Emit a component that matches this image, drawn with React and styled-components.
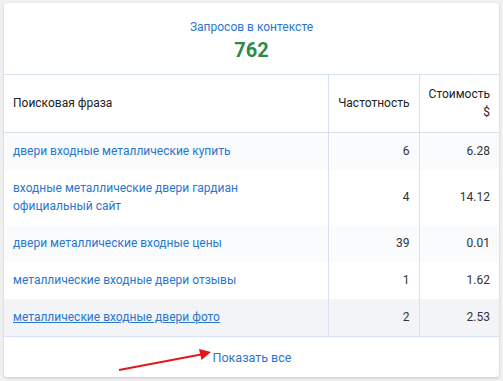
import React from 'react';
import styled, {createGlobalStyle} from "styled-components";

const GlobalStyle = createGlobalStyle`
  html, body {
    margin: 0;
    padding: 0;
    background: #f1f1f1;
    font-family: Roboto, "Liberation Sans", Arial, sans-serif;
  }
`;

const rows = [
    {phrase: "двери входные металлические купить", freq: 6, cost: "6.28"},
    {phrase: "входные металлические двери гардиан официальный сайт", freq: 4, cost: "14.12"},
    {phrase: "двери металлические входные цены", freq: 39, cost: "0.01"},
    {phrase: "металлические входные двери отзывы", freq: 1, cost: "1.62"},
    {phrase: "металлические входные двери фото", freq: 2, cost: "2.53", hovered: true},
];

const App = () => {
    return (
        <Page>
            <GlobalStyle/>
            <Card>
                <Summary>
                    <SummaryTitle>Запросов в контексте</SummaryTitle>
                    <SummaryValue>762</SummaryValue>
                </Summary>
                <Table>
                    <colgroup>
                        <col style={{width: 324}}/>
                        <col style={{width: 91}}/>
                        <col/>
                    </colgroup>
                    <thead>
                    <tr>
                        <Th>Поисковая фраза</Th>
                        <Th $right>Частотность</Th>
                        <Th $right>Стоимость<br/>$</Th>
                    </tr>
                    </thead>
                    <tbody>
                    {rows.map((item, key) => (
                        <Row key={key} $striped={key % 2 === 0} $hovered={item.hovered}>
                            <Td><PhraseLink href="#" $hovered={item.hovered}>{item.phrase}</PhraseLink></Td>
                            <Td $right>{item.freq}</Td>
                            <Td $right>{item.cost}</Td>
                        </Row>
                    ))}
                    </tbody>
                </Table>
                <Footer>
                    <ShowAll href="#">Показать все</ShowAll>
                    <Arrow width="100" height="24" viewBox="0 0 100 24">
                        <line x1="2" y1="21" x2="84" y2="5.5" stroke="#e3161c" strokeWidth="2"/>
                        <polygon points="94,3 82,0 84.5,11" fill="#e3161c"/>
                    </Arrow>
                </Footer>
            </Card>
        </Page>
    );
};

const Page = styled.div`
  padding: 3px 4px 3px 4px;
`;

const Card = styled.div`
  position: relative;
  background: #ffffff;
  border-radius: 3px;
  box-shadow: 0 1px 3px rgba(0, 0, 0, 0.18);
  overflow: hidden;
`;

const Summary = styled.div`
  height: 72px;
  display: flex;
  flex-direction: column;
  align-items: center;
  padding-top: 16px;
  box-sizing: border-box;
  border-bottom: 1px solid #d7e1f1;
`;

const SummaryTitle = styled.div`
  color: #2a76cc;
  font-size: 12px;
  line-height: 16px;
`;

const SummaryValue = styled.div`
  color: #2e8b4e;
  font-size: 20px;
  font-weight: 700;
  line-height: 26px;
  margin-top: 2px;
`;

const Table = styled.table`
  width: 100%;
  border-collapse: collapse;
  table-layout: fixed;
  font-size: 12px;
  line-height: 18px;
`;

const Th = styled.th`
  font-weight: 400;
  color: #222;
  text-align: ${p => p.$right ? "right" : "left"};
  padding: 10px 9px 10px 9px;
  height: 57px;
  box-sizing: border-box;
  vertical-align: middle;
  border-bottom: 1px solid #d7e1f1;
  & + & {
    border-left: 1px solid #d7e1f1;
  }
`;

const Row = styled.tr`
  background: ${p => p.$hovered ? "#f2f4f8" : p.$striped ? "#fafbfd" : "#ffffff"};
`;

const Td = styled.td`
  color: #333;
  text-align: ${p => p.$right ? "right" : "left"};
  padding: 9px 9px 10px 9px;
  vertical-align: middle;
  & + & {
    border-left: 1px solid #d7e1f1;
  }
`;

const PhraseLink = styled.a`
  color: #2a76cc;
  text-decoration: ${p => p.$hovered ? "underline" : "none"};
`;

const Footer = styled.div`
  height: 41px;
  display: flex;
  align-items: center;
  justify-content: center;
  padding-left: 1px;
  border-top: 1px solid #d7e1f1;
  box-sizing: border-box;
`;

const ShowAll = styled.a`
  color: #2a76cc;
  font-size: 12.5px;
  text-decoration: none;
  margin-top: 1px;
`;

const Arrow = styled.svg`
  position: absolute;
  left: 113px;
  bottom: 4px;
`;

export default App;
